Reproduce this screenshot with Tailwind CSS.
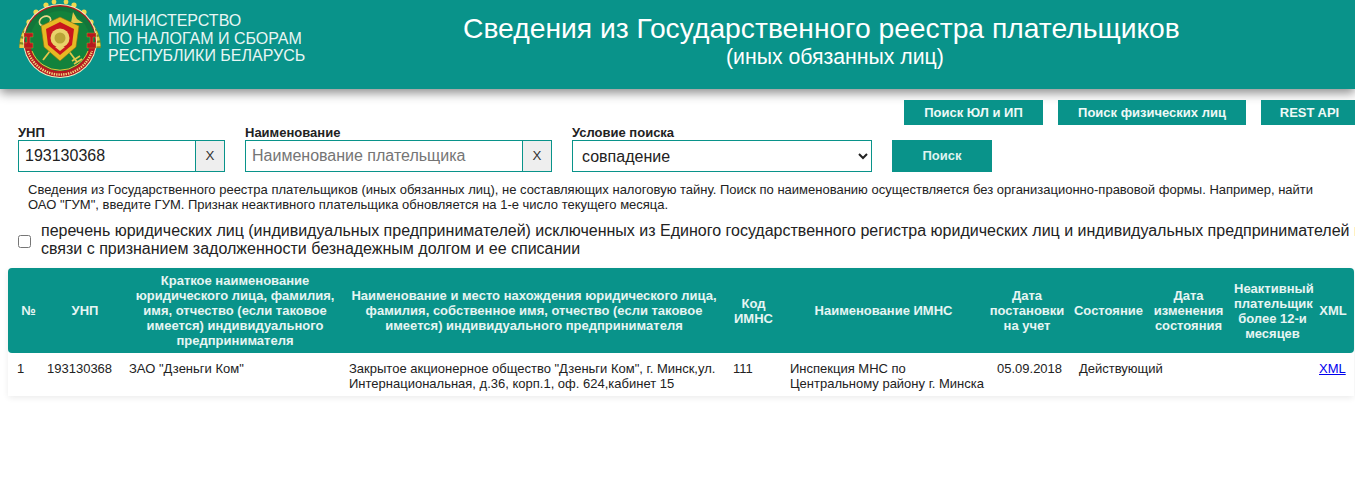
<!DOCTYPE html>
<html lang="ru">
<head>
  <meta charset="UTF-8"/>
  <title>Сведения из Государственного реестра плательщиков</title>
  <script src="https://cdn.jsdelivr.net/npm/@tailwindcss/browser@4"></script>
</head>
<body class="bg-white text-black font-['Liberation_Sans',Arial,sans-serif] overflow-hidden h-[477px]">
  <!-- Header -->
  <header class="h-[89px] bg-[#09938a] flex shadow-[0_4px_10px_rgba(0,0,0,0.45)] overflow-hidden">
    <svg class="ml-[17px] mt-[-2px] w-[86px] h-[86px] shrink-0" viewBox="0 0 86 86">
      <!-- wreath, upper arc -->
      <path d="M5 50 A38 38 0 1 1 81 50" fill="none" stroke="#7f8a24" stroke-width="6"/>
      <path d="M5 50 A38 38 0 1 1 81 50" fill="none" stroke="#e6cf45" stroke-width="5" stroke-dasharray="3.5 2.2"/>
      <g fill="#f0d94e">
        <circle cx="12" cy="24" r="2.6"/><circle cx="19" cy="14" r="2.6"/><circle cx="29" cy="7" r="2.6"/><circle cx="37" cy="4" r="2.4"/>
        <circle cx="49" cy="4" r="2.4"/><circle cx="57" cy="7" r="2.6"/><circle cx="67" cy="14" r="2.6"/><circle cx="74" cy="24" r="2.6"/>
      </g>
      <!-- disk -->
      <circle cx="43" cy="43" r="37" fill="#f2ecc0"/>
      <circle cx="43" cy="43" r="36" fill="#b5181f"/>
      <path d="M8 38 A35.5 35.5 0 0 1 78 38 L78 44 L8 44 Z" fill="#12763a"/>
      <circle cx="43" cy="43" r="30" fill="#12823c"/>
      <path d="M15 53 A30 30 0 0 0 71 53" fill="none" stroke="#e8c33a" stroke-width="1"/>
      <!-- band lettering -->
      <path d="M11 53 A33.5 33.5 0 0 0 75 53" fill="none" stroke="#f0d27a" stroke-width="2.4" stroke-dasharray="1.4 1"/>
      <!-- side ornaments -->
      <path d="M7 35h9v4h-3v6h3v5H7v-5h3v-6H7z" fill="#b5181f" stroke="#c9a52e" stroke-width="0.4"/>
      <path d="M70 35h9v4h-3v6h3v5h-9v-5h3v-6h-3z" fill="#b5181f" stroke="#c9a52e" stroke-width="0.4"/>
      <!-- key and wand -->
      <ellipse cx="28" cy="23" rx="6" ry="4.5" transform="rotate(-30 28 23)" fill="none" stroke="#ecd88a" stroke-width="1.6"/>
      <path d="M32 27 L60 64" stroke="#e3c84a" stroke-width="1.8" fill="none"/>
      <path d="M58 21 L26 62" stroke="#e3c84a" stroke-width="1.8" fill="none"/>
      <path d="M56 14 L54 25 L66 25 L60 21 Z" fill="#e3c84a"/>
      <path d="M55 63 L63 58 M57 66 L65 61" stroke="#e3c84a" stroke-width="1.6"/>
      <!-- shield -->
      <path d="M43 19 L62 28 L59 49 L43 63 L27 49 L24 28 Z" fill="#e6b923" stroke="#8a6d10" stroke-width="0.6"/>
      <path d="M43 24 L57 31 L55 47 L43 57 L31 47 L29 31 Z" fill="#c9161d"/>
      <circle cx="43" cy="40" r="9.5" fill="#e9d26a"/>
      <circle cx="43" cy="40" r="5.5" fill="#b9a437"/>
      <path d="M38 49 L43 53 L48 49 Z" fill="#e9d26a"/>
    </svg>
    <div class="ml-[5px] mt-[12px] text-[16px] leading-[17.5px] text-[#e8f6f4] w-[230px] shrink-0">
      <div>МИНИСТЕРСТВО</div>
      <div>ПО НАЛОГАМ И СБОРАМ</div>
      <div>РЕСПУБЛИКИ БЕЛАРУСЬ</div>
    </div>
    <div class="ml-[125px] mt-[10px] text-white">
      <div class="text-[28.25px] leading-[36px] whitespace-nowrap">Сведения из Государственного реестра плательщиков</div>
      <div class="text-[21.25px] leading-[22px] text-center pl-[27px]">(иных обязанных лиц)</div>
    </div>
  </header>

  <!-- Nav buttons -->
  <div class="flex justify-end gap-[15px] mt-[11px] h-[25px]">
    <a class="w-[139px] bg-[#09938a] text-[#eef9f7] text-[13px] font-bold flex items-center justify-center">Поиск ЮЛ и ИП</a>
    <a class="w-[188px] bg-[#09938a] text-[#eef9f7] text-[13px] font-bold flex items-center justify-center">Поиск физических лиц</a>
    <a class="w-[94px] pl-[3px] bg-[#09938a] text-[#eef9f7] text-[13px] font-bold flex items-center justify-center">REST API</a>
  </div>

  <!-- Search form -->
  <form class="flex items-end pl-[18px] mt-[1px] h-[46px]">
    <div class="w-[207px]">
      <div class="text-[13px] font-bold leading-[14px] text-[#222]">УНП</div>
      <div class="flex h-[32px]">
        <input class="w-[178px] border border-[#09938a] px-[6px] text-[16px] text-[#222] outline-none" value="193130368">
        <button type="button" class="w-[29px] border border-l-0 border-[#09938a] bg-[#eeeeee] text-[13.33px] text-[#333]">X</button>
      </div>
    </div>
    <div class="w-[307px] ml-[20px]">
      <div class="text-[13px] font-bold leading-[14px] text-[#222]">Наименование</div>
      <div class="flex h-[32px]">
        <input class="w-[278px] border border-[#09938a] px-[6px] text-[16px] text-[#222] placeholder:text-[#757575] outline-none" placeholder="Наименование плательщика">
        <button type="button" class="w-[29px] border border-l-0 border-[#09938a] bg-[#eeeeee] text-[13.33px] text-[#333]">X</button>
      </div>
    </div>
    <div class="w-[300px] ml-[20px]">
      <div class="text-[13px] font-bold leading-[14px] text-[#222]">Условие поиска</div>
      <select class="w-[300px] h-[32px] border border-[#09938a] pl-[5px] text-[16px] text-[#222] bg-white outline-none appearance-auto">
        <option>совпадение</option>
      </select>
    </div>
    <button type="button" class="w-[100px] h-[32px] ml-[20px] bg-[#09938a] text-[#dff3f0] text-[13px] font-bold">Поиск</button>
  </form>

  <!-- Note -->
  <p class="mt-[10px] ml-[28px] w-[1290px] text-[13px] leading-[15px] text-[#222]">Сведения из Государственного реестра плательщиков (иных обязанных лиц), не составляющих налоговую тайну. Поиск по наименованию осуществляется без организационно-правовой формы. Например, найти ОАО "ГУМ", введите ГУМ. Признак неактивного плательщика обновляется на 1-е число текущего месяца.</p>

  <!-- Checkbox -->
  <label class="flex items-center pl-[18px] mt-[10px] h-[36px]">
    <input type="checkbox" class="w-[13px] h-[13px] shrink-0 appearance-auto mt-[2px]">
    <span class="ml-[10px] w-[1330px] shrink-0 text-[16px] leading-[18px] text-[#222]">перечень юридических лиц (индивидуальных предпринимателей) исключенных из Единого государственного регистра юридических лиц и индивидуальных предпринимателей в<br>связи с признанием задолженности безнадежным долгом и ее списании</span>
  </label>

  <!-- Results table -->
  <div class="ml-[8px] mt-[10px] w-[1346px] rounded-[4px] shadow-[0_2px_6px_rgba(0,0,0,0.08)]">
    <table class="w-[1346px] table-fixed border-collapse text-[13px] leading-[15px] text-[#222]">
      <colgroup>
        <col class="w-[31px]"><col class="w-[82px]"><col class="w-[220px]"><col class="w-[384px]"><col class="w-[57px]"><col class="w-[207px]"><col class="w-[82px]"><col class="w-[76px]"><col class="w-[81px]"><col class="w-[83px]"><col class="w-[43px]">
      </colgroup>
      <thead class="bg-[#09938a] text-[#e6f5f3]">
        <tr class="h-[85px] text-center font-bold">
          <th class="pl-[10px] rounded-l-[4px] font-bold">№</th>
          <th class="pl-[10px] font-bold">УНП</th>
          <th class="pl-[8px] pr-0 font-bold">Краткое наименование юридического лица, фамилия, имя, отчество (если таковое имеется) индивидуального предпринимателя</th>
          <th class="pl-[3px] pr-[1px] font-bold">Наименование и место нахождения юридического лица, фамилия, собственное имя, отчество (если таковое имеется) индивидуального предпринимателя</th>
          <th class="font-bold">Код<br>ИМНС</th>
          <th class="pr-[4px] font-bold">Наименование ИМНС</th>
          <th class="pr-[6px] font-bold">Дата постановки на учет</th>
          <th class="pr-[1px] font-bold">Состояние</th>
          <th class="pl-[2px] font-bold">Дата изменения состояния</th>
          <th class="pl-[6px] font-bold">Неактивный плательщик более 12-и месяцев</th>
          <th class="pl-[1px] rounded-r-[4px] font-bold">XML</th>
        </tr>
      </thead>
      <tbody class="bg-white">
        <tr class="h-[43px] align-top">
          <td class="pl-[9px] pt-[8px]">1</td>
          <td class="pl-[8px] pt-[8px]">193130368</td>
          <td class="pl-[8px] pt-[8px]">ЗАО "Дзеньги Ком"</td>
          <td class="pl-[8px] pt-[8px]">Закрытое акционерное общество "Дзеньги Ком", г. Минск,ул. Интернациональная, д.36, корп.1, оф. 624,кабинет 15</td>
          <td class="pl-[8px] pt-[8px]">111</td>
          <td class="pl-[8px] pt-[8px]">Инспекция МНС по Центральному району г. Минска</td>
          <td class="pl-[8px] pt-[8px]">05.09.2018</td>
          <td class="pl-[8px] pt-[8px]">Действующий</td>
          <td class="pl-[8px] pt-[8px]"></td>
          <td class="pl-[8px] pt-[8px]"></td>
          <td class="pl-[8px] pt-[8px]"><a href="#" class="text-[#0000ee] underline">XML</a></td>
        </tr>
      </tbody>
    </table>
  </div>
</body>
</html>
